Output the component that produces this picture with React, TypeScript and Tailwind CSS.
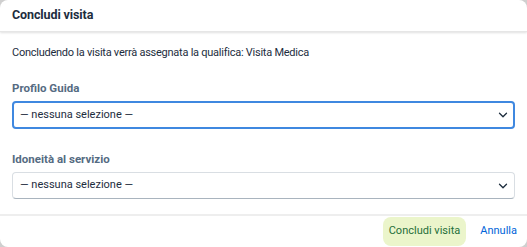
import React from "react";
import { ChevronDown } from "lucide-react";

function SelectBox({ focused }: { focused?: boolean }) {
  return (
    <div
      className={
        focused
          ? "mx-3 h-[28px] flex items-center justify-between pl-[6px] pr-[3px] rounded-[4px] border-2 border-[#3f88e0] bg-white"
          : "mx-3 h-[27px] flex items-center justify-between pl-[7px] pr-[4px] rounded-[4px] border border-[#d9dee3] border-b-[#a9b4be] bg-white"
      }
    >
      <span className="text-[11px] text-[#1d2d3e]">— nessuna selezione —</span>
      <ChevronDown size={14} strokeWidth={2.25} className="text-[#1d2d3e]" />
    </div>
  );
}

export default function App() {
  return (
    <div className="w-[527px] h-[247px] bg-[#cfcfcf] font-['Roboto','Liberation_Sans',Arial,sans-serif]">
      <div className="w-full h-full bg-white rounded-[8px] flex flex-col overflow-hidden">
        {/* Header */}
        <div className="h-[32px] shrink-0 flex items-center px-3 shadow-[0_1px_2px_rgba(0,0,0,0.12)] border-b border-[#e6e6e6]">
          <h1 className="text-[12.5px] font-bold tracking-[-0.1px] text-[#1d2d3e]">Concludi visita</h1>
        </div>

        {/* Body */}
        <div className="flex-1 flex flex-col">
          <p className="px-3 pt-[13px] text-[11px] tracking-[-0.25px] text-[#1d2d3e]">
            Concludendo la visita verrà assegnata la qualifica: Visita Medica
          </p>

          <div className="mt-[18px] px-3 text-[11.5px] font-bold text-[#556b82]">Profilo Guida</div>
          <div className="mt-[4px]">
            <SelectBox focused />
          </div>

          <div className="mt-[22px] px-3 text-[11.5px] font-bold text-[#556b82]">Idoneità al servizio</div>
          <div className="mt-[4px]">
            <SelectBox />
          </div>
        </div>

        {/* Footer */}
        <div className="h-[33px] shrink-0 border-t-2 border-[#eeeeee] flex items-center justify-end gap-[14px] pr-[10px]">
          <button className="h-[29px] px-[6px] rounded-[8px] bg-[#ebf5cb] text-[11px] text-[#256f3a]">
            Concludi visita
          </button>
          <button className="text-[11px] text-[#0064d9]">Annulla</button>
        </div>
      </div>
    </div>
  );
}
